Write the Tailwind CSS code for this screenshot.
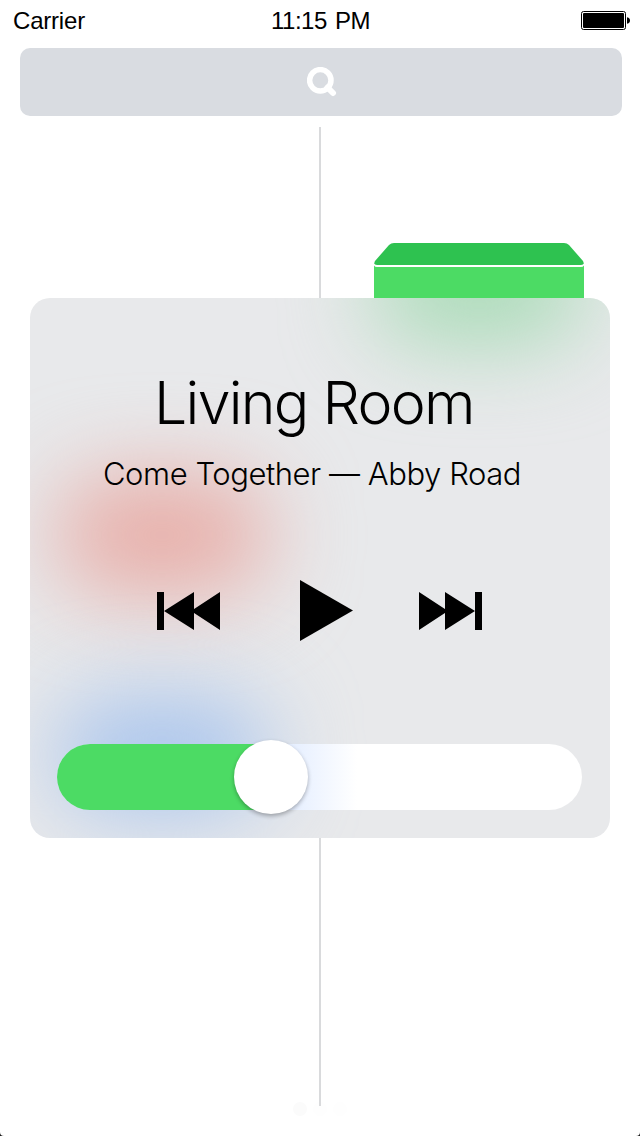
<!DOCTYPE html>
<html lang="en">
<head>
<meta charset="utf-8">
<title>Living Room</title>
<script src="https://cdn.jsdelivr.net/npm/@tailwindcss/browser@4"></script>
</head>
<body class="bg-[#1a1a1a]">
<div class="relative isolate h-[1136px] w-[640px] overflow-hidden rounded-b-[4px] bg-white font-['Liberation_Sans',sans-serif] text-black">
  <header class="grid h-[40px] grid-cols-3 items-center pl-[13px] pr-[10px] text-[24px] leading-[38px]">
    <span class="pt-[2px] tracking-[-0.2px]">Carrier</span>
    <span class="-ml-[2px] whitespace-nowrap pt-[2px] text-center tracking-[-0.5px] [word-spacing:2px]">11:15 PM</span>
    <svg class="justify-self-end" width="50" height="20" viewBox="0 0 50 20">
      <rect x="1.5" y="1.5" width="44" height="18" rx="2" fill="none" stroke="#000" stroke-width="1"/>
      <rect x="3" y="3" width="41" height="15" rx="1"/>
      <path d="M47 7.3C49.4 7.7 50 9 50 10.5s-.6 2.9-3 3.3z"/>
    </svg>
  </header>

  <div class="ml-5 mt-2 flex h-[68px] w-[602px] items-center justify-center rounded-[10px] bg-[#d9dce1] pl-[2px]">
    <svg width="30" height="30" viewBox="0 0 30 30" fill="none" stroke="#fff">
      <circle cx="13.3" cy="13.3" r="10.7" stroke-width="5.5"/>
      <path d="M20.5 20.5l5.5 5.5" stroke-width="6" stroke-linecap="round"/>
    </svg>
  </div>

  <div class="absolute left-[319px] top-[127px] -z-10 h-[979px] w-[2px] bg-[#d9dadc]"></div>
  <svg class="absolute left-[374px] top-[243px]" width="210" height="56" viewBox="0 0 210 56">
    <path d="M20 0H190Q193 0 195 2L209 18Q211 22 207 22H3Q-1 22 1 18L15 2Q17 0 20 0Z" fill="#2ec250"/>
    <path d="M0 22.5Q1 24 3 24H207Q209 24 210 22.5V56H0Z" fill="#4cdb64"/>
  </svg>

  <main class="relative isolate ml-[30px] mt-[182px] flex h-[540px] w-[580px] flex-col overflow-hidden rounded-[20px] bg-[#e8e9eb]">
    <div class="absolute left-[344px] top-[-65px] -z-10 h-[110px] w-[210px] rounded-[50px] bg-[#a8dbb6] blur-[44px]"></div>
    <div class="absolute left-[27px] top-[179px] -z-10 h-[116px] w-[210px] rounded-[50px] bg-[#e8aca6] blur-[44px]"></div>
    <div class="absolute left-[27px] top-[400px] -z-10 h-[114px] w-[210px] rounded-[50px] bg-[#a8c4ed] blur-[44px]"></div>

    <h1 class="mt-[70px] whitespace-nowrap pl-[124px] font-['Inter',sans-serif] text-[59px] font-light leading-[70px] tracking-[-1.7px]">Living Room</h1>
    <p class="mt-[16px] whitespace-nowrap pl-[73px] font-['Inter',sans-serif] text-[31px] font-light leading-[40px] tracking-[-0.45px]">Come Together — Abby Road</p>

    <div class="mt-[86px] flex h-[61px] items-center pl-[127px]">
      <svg width="63" height="38" viewBox="0 0 63 38"><path d="M0 0H7V38H0ZM7 19L37 0V38ZM34 19L63 0V38Z"/></svg>
      <svg class="ml-[80px]" width="53" height="61" viewBox="0 0 53 61"><path d="M0 0L53 30.5L0 61Z"/></svg>
      <svg class="ml-[66px]" width="63" height="38" viewBox="0 0 63 38"><path d="M0 0L29 19L0 38ZM26 0L56 19L26 38ZM56 0H63V38H56Z"/></svg>
    </div>

    <div class="relative ml-[27px] mt-[103px] h-[66px] w-[525px] rounded-full bg-linear-to-r from-[#e0ebff] from-[220px] to-white to-[300px]">
      <div class="h-full w-[214px] rounded-l-full bg-[#4cdb64]"></div>
      <div class="absolute left-[177px] top-[-4px] h-[74px] w-[74px] rounded-full bg-white shadow-[0_2px_4px_rgba(0,0,0,0.3)]"></div>
    </div>
  </main>

  <div class="absolute left-[293px] top-[1102px] -z-20 flex items-center gap-[6px]">
    <i class="size-[14px] rounded-full bg-[#fbfbfb]"></i>
    <i class="size-[14px] rounded-full bg-[#fefefe]"></i>
    <i class="size-[14px] rounded-full bg-[#fefefe]"></i>
  </div>
</div>
</body>
</html>
